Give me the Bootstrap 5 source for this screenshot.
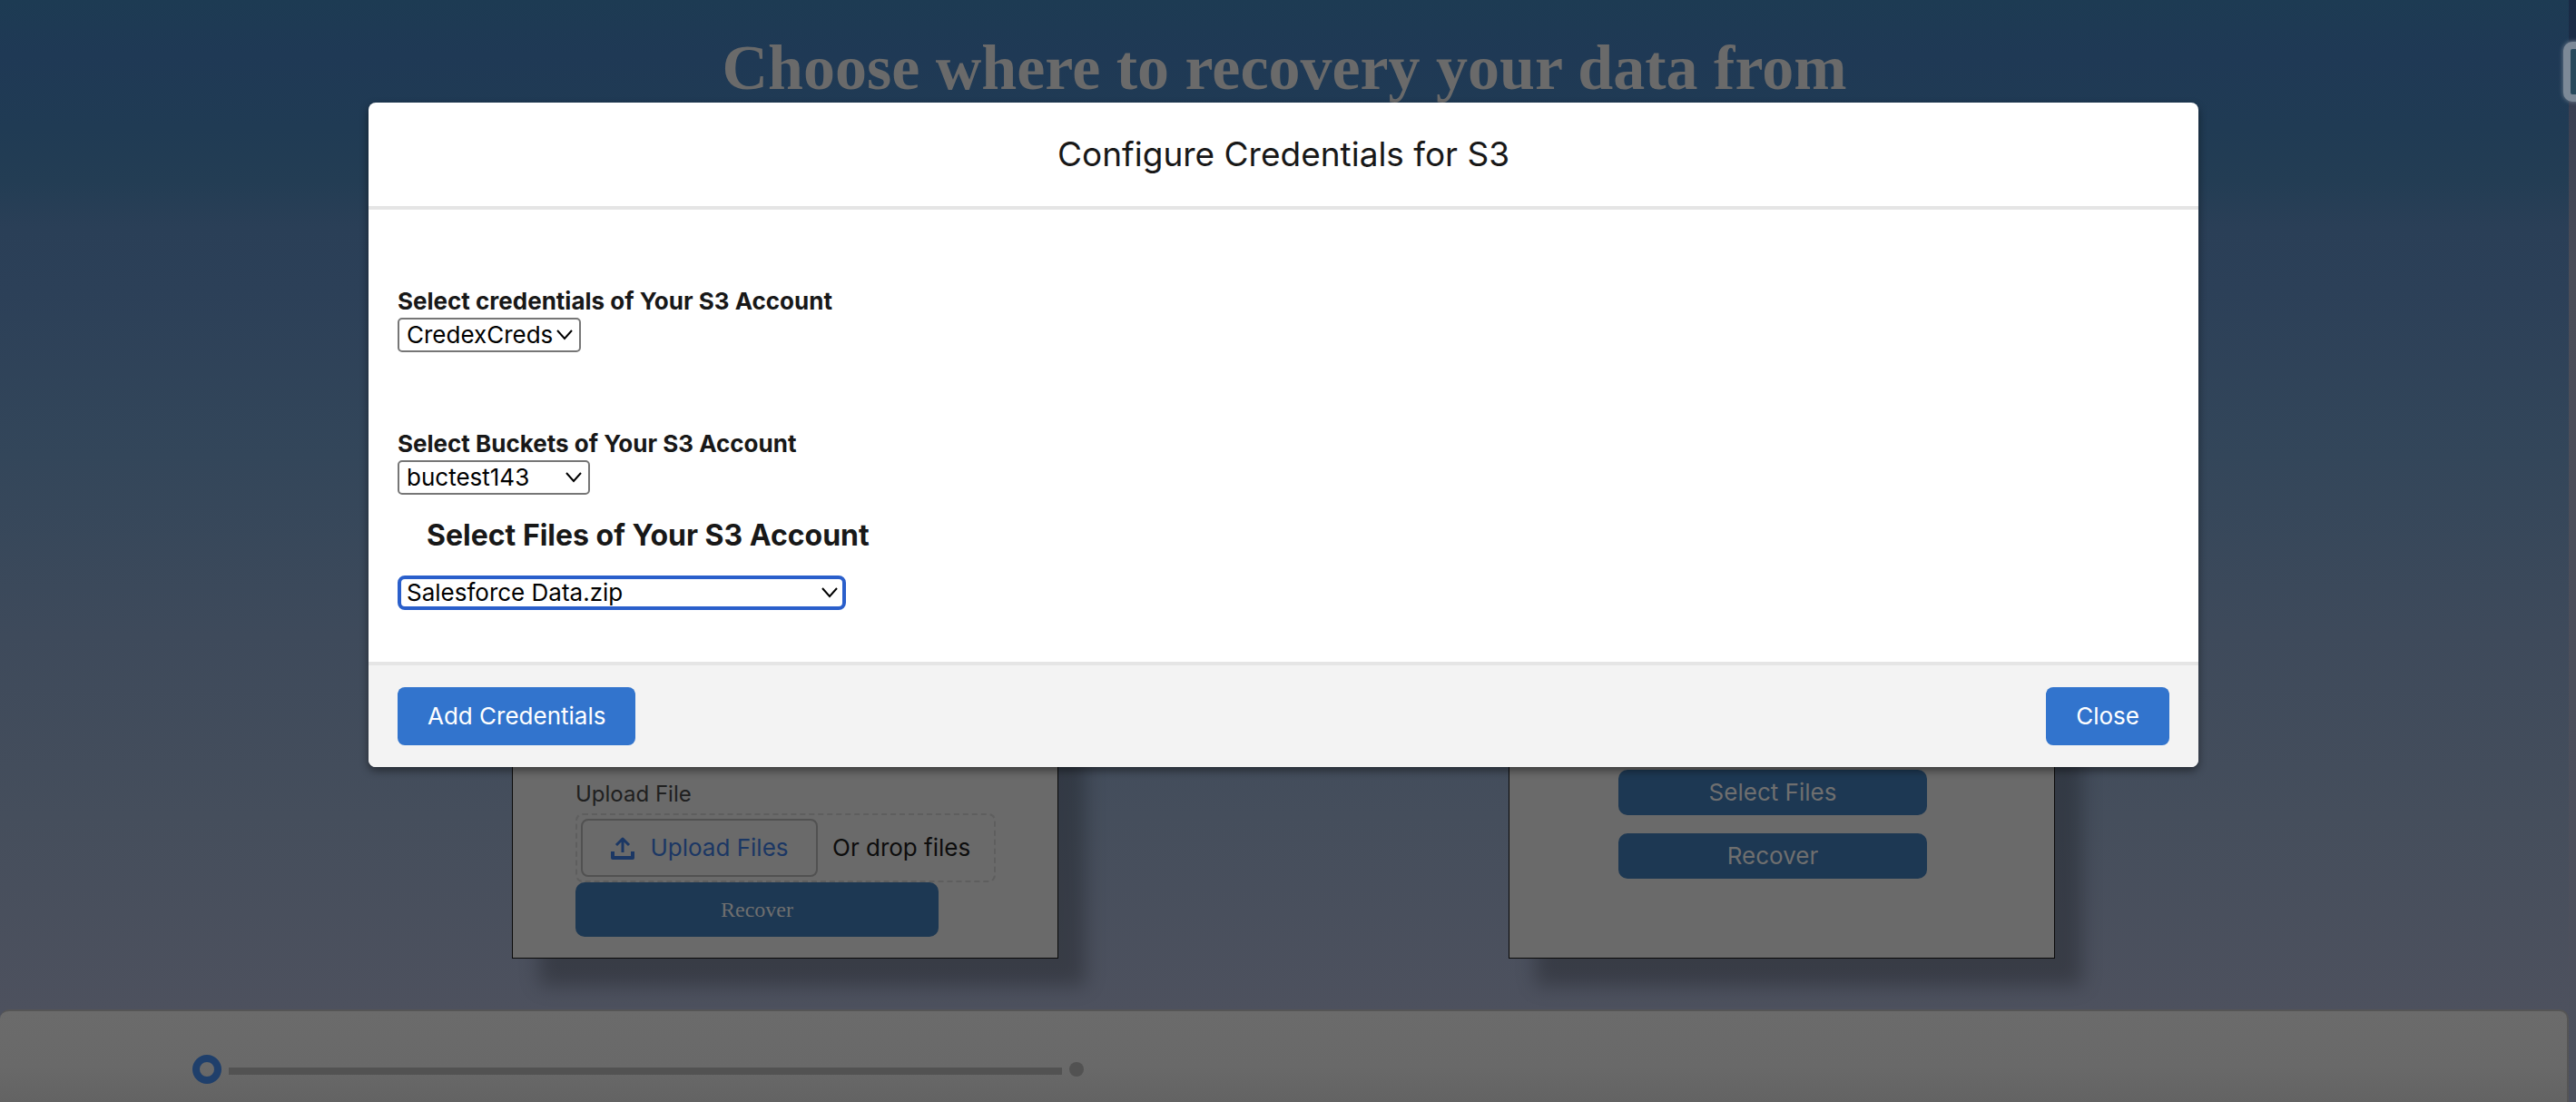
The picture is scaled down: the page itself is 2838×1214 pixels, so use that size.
<!DOCTYPE html>
<html lang="en">
<head>
<meta charset="utf-8">
<meta name="viewport" content="width=device-width, initial-scale=1">
<title>Data Recovery</title>
<link rel="stylesheet" href="https://cdn.jsdelivr.net/npm/bootstrap@5.3.0/dist/css/bootstrap.min.css">
<style>
  body {
    font-family: Inter, "Liberation Sans", sans-serif;
    font-size: 26px;
    line-height: 36px;
    color: #181818;
    height: 100vh;
    overflow: hidden;
    background: linear-gradient(#1a2b45 0, #1c2f48 80px, #3a4052 120px, #4b4d58 300px, #4d515e 1214px);
  }
  .page-area {
    height: 100vh;
    margin-right: 8px;
    background: linear-gradient(#1d3b53 0, #1f3955 60px, #203b54 140px, #233d54 200px, #2a3f57 250px, #2c4058 320px, #33465a 500px, #3e4a5b 700px, #454e5c 900px, #4d515e 1112px);
  }
  .page-title {
    font: bold 70px/80px "Liberation Serif", serif;
    color: #6a6a6a;
    padding-top: 35px;
    height: 170px;
  }
  .tile-row { gap: 496px; padding-right: 2px; }
  .tile {
    width: 602px;
    height: 886px;
    background: #6a6a6a;
    border: 1px solid #0a0a0a;
    box-shadow: 30px 30px 20px rgba(0, 0, 0, .25);
  }
  .tile-left { padding: 0 69px 23px; }
  .tile-right { padding: 0 140px 87px 120px; gap: 20px; }
  .field-title { font-size: 24px; line-height: 32px; color: #202020; margin-bottom: 5px; }
  .drop-zone { width: 463px; height: 76px; border: 2px dashed #5e5e5e; border-radius: 8px; padding: 4px; color: #0d0d0d; }
  .upload-btn { width: 261px; height: 64px; border: 2px solid #515151; border-radius: 8px; color: #1b3764; background: none; }
  .dim-btn { height: 50px; border: 0; border-radius: 10px; background: #1d3853; color: #6f6f6f; }
  .dim-btn.tall { width: 400px; height: 60px; font: 24px/32px "Liberation Serif", serif; }
  .progress-panel {
    height: 102px;
    border: 2px solid #555;
    border-bottom: 0;
    border-left: 0;
    border-radius: 10px 10px 0 0;
    background: linear-gradient(#6b6b6b 0, #696969 60px, #636363 100px);
    padding: 28px 0 0 212px;
  }
  .step-now { width: 32px; height: 32px; border: 8px solid #1f3f6b; border-radius: 50%; }
  .step-line { width: 918px; height: 8px; background: #525252; margin-top: 4px; }
  .step-next { width: 16px; height: 16px; border-radius: 50%; background: #525252; }
  .edge-box { top: 46px; left: 100%; margin-left: -6px; width: 40px; height: 66px; border: 8px solid #7c8997; border-radius: 10px; background: #28495c; box-shadow: 0 0 5px #7c8997; }
  .dialog-box {
    top: 113px;
    left: 406px;
    right: 416px;
    background: #fff;
    border-radius: 8px;
    box-shadow: 0 4px 10px rgba(0, 0, 0, .45);
  }
  .dialog-head { padding: 33px 32px; border-bottom: 4px solid #e5e5e5; }
  .dialog-head h2 { font-size: 37px; line-height: 48px; font-weight: 400; }
  .dialog-main { padding: 83px 32px 57px; }
  .dialog-foot { padding: 24px 32px; background: #f3f3f3; border-top: 4px solid #e5e5e5; border-radius: 0 0 8px 8px; }
  .field-label { font-weight: 700; display: block; }
  .bucket-label { margin-top: 83px; }
  .files-label { font-weight: 700; font-size: 32px; line-height: 40px; margin: 25px 32px 24px; }
  .pick {
    appearance: none;
    height: 38px;
    border: 2px solid #767676;
    border-radius: 5px;
    padding: 0 8px;
    line-height: 34px;
    color: #000;
    background: #fff url("data:image/svg+xml,%3Csvg xmlns='http://www.w3.org/2000/svg' viewBox='0 0 18 12'%3E%3Cpath d='M1 1l8 9 8-9' fill='none' stroke='%23000' stroke-width='2'/%3E%3C/svg%3E") no-repeat right 7px center / 18px 12px;
  }
  .pick-creds { width: 202px; }
  .pick-bucket { width: 212px; }
  .pick-file { width: 494px; border: 4px solid #2a5fcb; border-radius: 8px; padding: 0 6px; line-height: 30px; outline: 0; background-position: right 5px center; }
  .main-btn { height: 64px; padding: 0 33px; border-radius: 8px; border: 0; background: #3274cd; color: #fff; }
</style>
</head>
<body>
<div class="page-area position-relative d-flex flex-column">
  <h1 class="page-title text-center mb-0">Choose where to recovery your data from</h1>
  <main class="tile-row d-flex flex-grow-1 justify-content-center">
    <section class="tile tile-left d-flex flex-column justify-content-end align-items-start">
      <label class="field-title" for="upload">Upload File</label>
      <div class="drop-zone d-flex align-items-center gap-3">
        <button id="upload" type="button" class="upload-btn d-flex align-items-center justify-content-center p-0">
          <svg class="me-3" width="28" height="28" viewBox="0 0 28 28" fill="none" stroke="currentColor" stroke-width="3" stroke-linejoin="round" aria-hidden="true"><path stroke-width="4" d="M3 18v7h22v-7"/><path d="M14 19V5M7 11l7-7 7 7"/></svg>
          Upload Files
        </button>
        <span>Or drop files</span>
      </div>
      <button type="button" class="dim-btn tall">Recover</button>
    </section>
    <section class="tile tile-right d-flex flex-column justify-content-end">
      <button type="button" class="dim-btn">Select Files</button>
      <button type="button" class="dim-btn">Recover</button>
    </section>
  </main>
  <footer class="progress-panel d-flex align-items-center gap-2">
    <span class="step-now"></span><span class="step-line"></span><span class="step-next"></span>
  </footer>
  <div class="edge-box position-absolute"></div>
</div>

<div class="dialog-box position-absolute" role="dialog" aria-labelledby="dialog-title">
  <header class="dialog-head text-center">
    <h2 id="dialog-title" class="mb-0">Configure Credentials for S3</h2>
  </header>
  <div class="dialog-main">
    <label class="field-label" for="creds">Select credentials of Your S3 Account</label>
    <select id="creds" class="pick pick-creds d-block"><option>CredexCreds</option></select>
    <label class="field-label bucket-label" for="bucket">Select Buckets of Your S3 Account</label>
    <select id="bucket" class="pick pick-bucket d-block"><option>buctest143</option></select>
    <label class="files-label d-block" for="file">Select Files of Your S3 Account</label>
    <select id="file" class="pick pick-file d-block"><option>Salesforce Data.zip</option></select>
  </div>
  <footer class="dialog-foot d-flex justify-content-between">
    <button type="button" class="main-btn">Add Credentials</button>
    <button type="button" class="main-btn">Close</button>
  </footer>
</div>
<script src="https://cdn.jsdelivr.net/npm/bootstrap@5.3.0/dist/js/bootstrap.bundle.min.js"></script>
</body>
</html>
